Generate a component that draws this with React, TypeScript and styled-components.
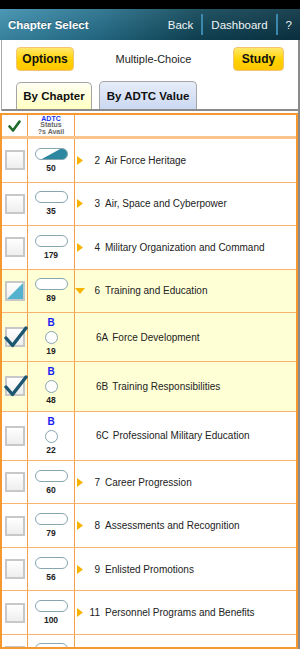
import React from "react";
import styled, { createGlobalStyle } from "styled-components";

const GlobalStyle = createGlobalStyle`
  html, body { margin: 0; padding: 0; background: #fff; }
  body {
    font-family: "Liberation Sans", Arial, sans-serif;
    width: 300px;
    height: 649px;
    overflow: hidden;
  }
`;

const Screen = styled.div`
  width: 300px;
  height: 649px;
  display: flex;
  flex-direction: column;
  overflow: hidden;
`;

const StatusStrip = styled.div`
  flex: none;
  height: 9px;
  background: #000;
`;

const NavBar = styled.div`
  flex: none;
  height: 31px;
  display: flex;
  align-items: center;
  padding-left: 8px;
  background: linear-gradient(to bottom, rgba(255, 255, 255, 0.08), rgba(0, 0, 0, 0.1)),
    linear-gradient(to right, #3d8fae 0%, #246d88 35%, #104658 65%, #0a3343 100%);
`;

const NavTitle = styled.div`
  flex: 1;
  color: #fff;
  font-weight: bold;
  font-size: 11.5px;
  text-shadow: 0 -1px 0 rgba(0, 0, 0, 0.35);
`;

const NavLink = styled.span`
  color: #eef4f6;
  font-size: 11.5px;
  padding: 0 8px;
`;

const NavSep = styled.span`
  width: 2px;
  height: 21px;
  background: #3a88ad;
`;

const Main = styled.div`
  flex: 1;
  min-height: 0;
  display: flex;
  flex-direction: column;
  border-right: 2px solid #8a8a8a;
`;

const TopSection = styled.div`
  margin-left: 1px;
  border-left: 1px solid #aaa;
`;

const Toolbar = styled.div`
  display: flex;
  align-items: center;
  justify-content: space-between;
  padding: 7px 14px 0 14px;
`;

const YellowButton = styled.div<{ $w: number }>`
  width: ${(p) => p.$w}px;
  height: 24px;
  box-sizing: border-box;
  display: flex;
  align-items: center;
  justify-content: center;
  border: 1px solid #f3c474;
  border-radius: 4px;
  background: linear-gradient(#ffe86a, #ffd200 55%, #ffc600);
  font-weight: bold;
  font-size: 12px;
  color: #111;
`;

const Mode = styled.div`
  font-size: 11px;
  color: #222;
`;

const TabStrip = styled.div`
  display: flex;
  align-items: flex-end;
  gap: 7px;
  padding: 10px 0 0 14px;
  border-bottom: 2px solid #8a8a8a;
`;

const Tab = styled.div<{ $active?: boolean; $w: number }>`
  width: ${(p) => p.$w}px;
  height: ${(p) => (p.$active ? 27 : 28)}px;
  box-sizing: border-box;
  border: 1px solid #a5a5a5;
  border-bottom: none;
  border-radius: 5px 5px 0 0;
  display: flex;
  align-items: center;
  justify-content: center;
  font-weight: bold;
  font-size: 11.5px;
  color: #111;
  background: ${(p) =>
    p.$active
      ? "linear-gradient(#fffff2, #ffffc2)"
      : "linear-gradient(#e6edf9, #cbd8f1)"};
`;

const TableWrap = styled.div`
  margin-top: 2px;
  flex: 1;
  min-height: 0;
  border: 2px solid #f4982f;
  overflow: hidden;
  background: #fff;
`;

const Row = styled.div<{ $h: number; $hl?: boolean; $head?: boolean }>`
  display: grid;
  grid-template-columns: 26px 47px 1fr;
  height: ${(p) => p.$h}px;
  box-sizing: border-box;
  border-bottom: ${(p) => (p.$head ? "3px solid #fbc48c" : "1px solid #f8b46e")};
  background: ${(p) => (p.$hl ? "#ffffd6" : "#fff")};
`;

const CheckCell = styled.div`
  position: relative;
  border-right: 1px solid #f5a04a;
  display: flex;
  align-items: center;
  justify-content: center;
`;

const AdtcCell = styled.div`
  border-right: 1px solid #f5a04a;
  display: flex;
  flex-direction: column;
  align-items: center;
  justify-content: center;
`;

const PeekCell = styled.div<{ $adtc?: boolean }>`
  border-right: 1px solid #f5a04a;
  display: flex;
  justify-content: center;
  padding-top: ${(p) => (p.$adtc ? 8 : 11)}px;
`;

const TextCell = styled.div<{ $sub?: boolean }>`
  display: flex;
  align-items: center;
  padding-left: ${(p) => (p.$sub ? 21 : 0)}px;
  font-size: 10px;
  color: #222;
  white-space: nowrap;
  overflow: hidden;
`;

const ArrowBox = styled.div`
  flex: none;
  width: 10px;
  display: flex;
  align-items: center;
  justify-content: center;
`;

const NumBox = styled.span<{ $sub?: boolean }>`
  flex: none;
  width: ${(p) => (p.$sub ? "auto" : "15px")};
  text-align: ${(p) => (p.$sub ? "left" : "right")};
  margin-right: ${(p) => (p.$sub ? 4 : 5)}px;
`;

const HeadLabel = styled.div<{ $blue?: boolean }>`
  font-size: 7px;
  line-height: 6.5px;
  font-weight: bold;
  color: ${(p) => (p.$blue ? "#2436ee" : "#6a6a6a")};
`;

const Box = styled.div`
  flex: none;
  width: 20px;
  height: 20px;
  box-sizing: border-box;
  border: 2px solid #c8c8c8;
  background: linear-gradient(#ffffff, #eeeeee);
  position: relative;
  overflow: hidden;
`;

const CheckOverlay = styled.svg`
  position: absolute;
  left: 2px;
  top: 50%;
  margin-top: -11px;
`;

const Count = styled.div`
  font-size: 8.5px;
  line-height: 10px;
  font-weight: bold;
  color: #222;
`;

const Grade = styled.div`
  font-size: 10px;
  line-height: 10px;
  font-weight: bold;
  color: #1a22f0;
`;

const Circle = styled.div`
  width: 13px;
  height: 13px;
  box-sizing: border-box;
  border: 1px solid #86a6b0;
  border-radius: 50%;
  background: #fff;
  margin: 3px 0 2px;
`;

const PillWrap = styled.div<{ $gap?: boolean }>`
  height: 12px;
  margin-bottom: ${(p) => (p.$gap === false ? 0 : 3)}px;
`;

type CbState = "none" | "checked" | "partial";

function CheckBox({ state }: { state: CbState }) {
  return (
    <>
      <Box>
        {state === "partial" && (
          <svg width="16" height="16" style={{ display: "block" }}>
            <polygon points="0,16 16,0 16,16" fill="#55b2ce" />
          </svg>
        )}
      </Box>
      {state === "checked" && (
        <CheckOverlay width="24" height="22" viewBox="0 0 24 22">
          <polyline
            points="2,12 8.5,19.5 22,2"
            fill="none"
            stroke="#1d5670"
            strokeWidth="3.4"
            strokeLinecap="round"
            strokeLinejoin="round"
          />
        </CheckOverlay>
      )}
    </>
  );
}

function Pill({ fill, id, gap }: { fill?: boolean; id: string; gap?: boolean }) {
  return (
    <PillWrap $gap={gap}>
      <svg width="33" height="12" viewBox="0 0 33 12" style={{ display: "block" }}>
        <defs>
          <clipPath id={id}>
            <rect x="0.5" y="0.5" width="32" height="11" rx="5.5" />
          </clipPath>
        </defs>
        <rect x="0.5" y="0.5" width="32" height="11" rx="5.5" fill="#fff" />
        {fill && (
          <polygon points="5,12 27,0 33,0 33,12" fill="#2e87a0" clipPath={`url(#${id})`} />
        )}
        <rect x="0.5" y="0.5" width="32" height="11" rx="5.5" fill="none" stroke="#86a6b0" strokeWidth="1" />
      </svg>
    </PillWrap>
  );
}

function RightArrow() {
  return (
    <svg width="6" height="9" viewBox="0 0 6 9">
      <polygon points="0,0 6,4.5 0,9" fill="#f6b400" />
    </svg>
  );
}

function DownArrow() {
  return (
    <svg width="10" height="6" viewBox="0 0 10 6">
      <polygon points="0,0 10,0 5,6" fill="#f6b400" />
    </svg>
  );
}

function HeaderCheck() {
  return (
    <svg width="13" height="12" viewBox="0 0 13 12">
      <polyline
        points="1.5,6.5 5,10.5 11.5,1.5"
        fill="none"
        stroke="#1d6a2a"
        strokeWidth="2.6"
        strokeLinecap="round"
        strokeLinejoin="round"
      />
    </svg>
  );
}

type Item = {
  kind: "chapter" | "sub";
  num: string;
  title: string;
  count: number;
  cb: CbState;
  hl?: boolean;
  expanded?: boolean;
  fill?: boolean;
};

const items: Item[] = [
  { kind: "chapter", num: "2", title: "Air Force Heritage", count: 50, cb: "none", fill: true },
  { kind: "chapter", num: "3", title: "Air, Space and Cyberpower", count: 35, cb: "none" },
  { kind: "chapter", num: "4", title: "Military Organization and Command", count: 179, cb: "none" },
  { kind: "chapter", num: "6", title: "Training and Education", count: 89, cb: "partial", hl: true, expanded: true },
  { kind: "sub", num: "6A", title: "Force Development", count: 19, cb: "checked", hl: true },
  { kind: "sub", num: "6B", title: "Training Responsibilities", count: 48, cb: "checked", hl: true },
  { kind: "sub", num: "6C", title: "Professional Military Education", count: 22, cb: "none" },
  { kind: "chapter", num: "7", title: "Career Progression", count: 60, cb: "none" },
  { kind: "chapter", num: "8", title: "Assessments and Recognition", count: 79, cb: "none" },
  { kind: "chapter", num: "9", title: "Enlisted Promotions", count: 56, cb: "none" },
  { kind: "chapter", num: "11", title: "Personnel Programs and Benefits", count: 100, cb: "none" },
];

export default function App() {
  return (
    <>
      <GlobalStyle />
      <Screen>
        <StatusStrip />
        <NavBar>
          <NavTitle>Chapter Select</NavTitle>
          <NavLink>Back</NavLink>
          <NavSep />
          <NavLink>Dashboard</NavLink>
          <NavSep />
          <NavLink>?</NavLink>
        </NavBar>
        <Main>
          <TopSection>
            <Toolbar>
              <YellowButton $w={58}>Options</YellowButton>
              <Mode>Multiple-Choice</Mode>
              <YellowButton $w={51}>Study</YellowButton>
            </Toolbar>
            <TabStrip>
              <Tab $active $w={76}>By Chapter</Tab>
              <Tab $w={98}>By ADTC Value</Tab>
            </TabStrip>
          </TopSection>
          <TableWrap>
            <Row $h={24} $head>
              <CheckCell>
                <HeaderCheck />
              </CheckCell>
              <AdtcCell>
                <HeadLabel $blue>ADTC</HeadLabel>
                <HeadLabel>Status</HeadLabel>
                <HeadLabel>?s Avail</HeadLabel>
              </AdtcCell>
              <TextCell />
            </Row>
            {items.map((it, i) => (
              <Row key={i} $h={it.kind === "sub" ? 49.3 : 43.5} $hl={it.hl}>
                <CheckCell>
                  <CheckBox state={it.cb} />
                </CheckCell>
                <AdtcCell>
                  {it.kind === "sub" ? (
                    <>
                      <Grade>B</Grade>
                      <Circle />
                    </>
                  ) : (
                    <Pill fill={it.fill} id={`pill-${i}`} />
                  )}
                  <Count>{it.count}</Count>
                </AdtcCell>
                <TextCell $sub={it.kind === "sub"}>
                  {it.kind === "chapter" && (
                    <ArrowBox>{it.expanded ? <DownArrow /> : <RightArrow />}</ArrowBox>
                  )}
                  <NumBox $sub={it.kind === "sub"}>{it.num}</NumBox>
                  <span>{it.title}</span>
                </TextCell>
              </Row>
            ))}
            <Row $h={43.5}>
              <PeekCell>
                <Box />
              </PeekCell>
              <PeekCell $adtc>
                <Pill id="pill-peek" gap={false} />
              </PeekCell>
              <TextCell />
            </Row>
          </TableWrap>
        </Main>
      </Screen>
    </>
  );
}
